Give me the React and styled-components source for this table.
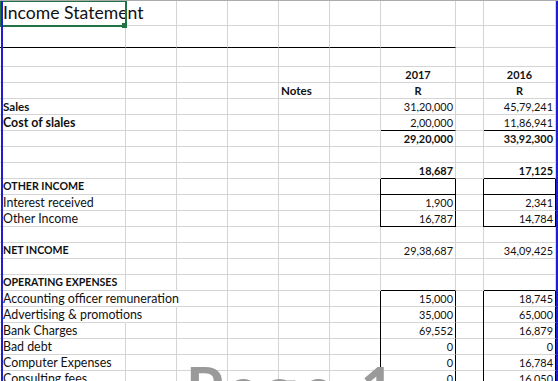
import React from 'react';
import styled, { createGlobalStyle } from 'styled-components';

const GlobalStyle = createGlobalStyle`
  html, body { margin: 0; padding: 0; background: #fff; }
  body { font-family: Lato, "Liberation Sans", sans-serif; color: #000; }
`;

const colWidths = [126, 51, 51, 51, 51, 51, 75, 28, 72];
const COLS = ['A', 'B', 'C', 'D', 'E', 'F', 'G', 'H', 'I'];

// row data: h = height in px (gridline included), cells keyed by column letter
const rows = [
  { h: 25, cells: { A: { text: 'Income Statement', size: 'title', noRight: true } } },
  { h: 22, cells: { A: { line: 'black' }, B: { line: 'black' }, C: { line: 'black' }, D: { line: 'black' }, E: { line: 'black' }, F: { line: 'black' }, G: { line: 'black' } } },
  { h: 19, cells: {} },
  { cells: { G: { text: '2017', bold: true, align: 'center', size: 'num' }, I: { text: '2016', bold: true, align: 'center', size: 'num' } } },
  { cells: { E: { text: 'Notes', bold: true }, G: { text: 'R', bold: true, align: 'center', size: 'num' }, I: { text: 'R', bold: true, align: 'center', size: 'num' } } },
  { cells: { A: { text: 'Sales', bold: true }, G: { text: '31,20,000', align: 'right', size: 'num' }, I: { text: '45,79,241', align: 'right', size: 'num' } } },
  { cells: { A: { text: 'Cost of slales', bold: true, size: 'label' }, G: { text: '2,00,000', align: 'right', size: 'num', line: 'black' }, I: { text: '11,86,941', align: 'right', size: 'num', line: 'black' } } },
  { cells: { G: { text: '29,20,000', bold: true, align: 'right', size: 'num' }, I: { text: '33,92,300', bold: true, align: 'right', size: 'num' } } },
  { cells: {} },
  { cells: { G: { text: '18,687', bold: true, align: 'right', size: 'num', line: 'black' }, I: { text: '17,125', bold: true, align: 'right', size: 'num', line: 'black' } } },
  { cells: { A: { text: 'OTHER INCOME', bold: true, size: 'caps' }, G: { box: true, line: 'black' }, I: { box: true, line: 'black' } } },
  { cells: { A: { text: 'Interest received', size: 'plain' }, G: { text: '1,900', align: 'right', size: 'num', box: true }, I: { text: '2,341', align: 'right', size: 'num', box: true } } },
  { cells: { A: { text: 'Other Income', size: 'plain' }, G: { text: '16,787', align: 'right', size: 'num', box: true, line: 'black' }, I: { text: '14,784', align: 'right', size: 'num', box: true, line: 'black' } } },
  { cells: {} },
  { cells: { A: { text: 'NET INCOME', bold: true, size: 'caps' }, G: { text: '29,38,687', align: 'right', size: 'num' }, I: { text: '34,09,425', align: 'right', size: 'num' } } },
  { cells: {} },
  { cells: { A: { text: 'OPERATING EXPENSES', bold: true, size: 'caps' }, G: { line: 'black' }, I: { line: 'black' } } },
  { cells: { A: { text: 'Accounting officer remuneration', size: 'plain', noRight: true }, B: { noRight: true }, G: { text: '15,000', align: 'right', size: 'num', box: true }, I: { text: '18,745', align: 'right', size: 'num', box: true } } },
  { cells: { A: { text: 'Advertising & promotions', size: 'plain', noRight: true }, G: { text: '35,000', align: 'right', size: 'num', box: true }, I: { text: '65,000', align: 'right', size: 'num', box: true } } },
  { cells: { A: { text: 'Bank Charges', size: 'plain' }, G: { text: '69,552', align: 'right', size: 'num', box: true }, I: { text: '16,879', align: 'right', size: 'num', box: true } } },
  { cells: { A: { text: 'Bad debt', size: 'plain' }, G: { text: '0', align: 'right', size: 'num', box: true }, I: { text: '0', align: 'right', size: 'num', box: true } } },
  { cells: { A: { text: 'Computer Expenses', size: 'plain' }, G: { text: '0', align: 'right', size: 'num', box: true }, I: { text: '16,784', align: 'right', size: 'num', box: true } } },
  { cells: { A: { text: 'Consulting fees', size: 'plain' }, G: { text: '0', align: 'right', size: 'num', box: true }, I: { text: '16,050', align: 'right', size: 'num', box: true } } },
];

export default function App() {
  return (
    <>
      <GlobalStyle />
      <Sheet>
        {rows.map((row, r) => (
          <Row key={r} $h={row.h || 16}>
            {COLS.map((c, i) => {
              const cell = row.cells[c] || {};
              return (
                <Cell
                  key={c}
                  $first={i === 0}
                  $bold={cell.bold}
                  $align={cell.align}
                  $size={cell.size}
                  $line={cell.line}
                  $box={cell.box}
                  $noRight={cell.noRight}
                >
                  {cell.text}
                </Cell>
              );
            })}
          </Row>
        ))}

        <Selection>
          <FillHandle />
        </Selection>
        <PageEdge $side="left" />
        <PageEdge $side="right" />
        <PageLabel>Page 1</PageLabel>
      </Sheet>
    </>
  );
}

const Sheet = styled.div`
  position: relative;
  width: 558px;
  height: 381px;
  overflow: hidden;
  background: #fff;
  border-top: 1px solid #ababab;
  box-sizing: border-box;
`;

const Row = styled.div`
  display: grid;
  grid-template-columns: ${colWidths.map((w) => w + 'px').join(' ')} 1fr;
  height: ${(p) => p.$h}px;
`;

const fontSizes = { title: '17.6px', num: '10.9px', caps: '10.6px', plain: '12.4px', label: '12.4px' };

const Cell = styled.div`
  box-sizing: border-box;
  display: flex;
  align-items: flex-end;
  justify-content: ${(p) => (p.$align === 'right' ? 'flex-end' : p.$align === 'center' ? 'center' : 'flex-start')};
  min-width: 0;
  padding: 0 2px ${(p) => (p.$size === 'title' ? '2px' : '0')} ${(p) => (p.$first ? '3px' : '2px')};
  white-space: nowrap;
  font-size: ${(p) => fontSizes[p.$size] || '11.6px'};
  line-height: ${(p) => (p.$size === 'title' ? '20px' : '15px')};
  font-weight: ${(p) => (p.$bold ? 700 : 400)};
  color: #111;
  border-right: 1px solid ${(p) => (p.$box ? '#000' : p.$noRight ? 'transparent' : '#d4d4d4')};
  border-bottom: 1px solid ${(p) => (p.$line === 'black' ? '#000' : '#d4d4d4')};
  box-shadow: ${(p) => (p.$box ? '-1px 0 0 #000' : 'none')};
`;

const Selection = styled.div`
  position: absolute;
  left: 0;
  top: -1px;
  width: 127px;
  height: 27px;
  box-sizing: border-box;
  border: 2px solid #217346;
`;

const FillHandle = styled.div`
  position: absolute;
  right: -2px;
  bottom: -3px;
  width: 5px;
  height: 5px;
  background: #217346;
`;

const PageEdge = styled.div`
  position: absolute;
  top: 0;
  bottom: 0;
  width: 2px;
  background: #1f1fcf;
  ${(p) => (p.$side === 'left' ? 'left: 1px;' : 'left: 556px;')}
`;

const PageLabel = styled.div`
  position: absolute;
  left: 186px;
  top: 356px;
  font-size: 60px;
  line-height: 60px;
  font-weight: 700;
  letter-spacing: 6px;
  color: #9a9a9a;
  white-space: nowrap;
  pointer-events: none;
`;
